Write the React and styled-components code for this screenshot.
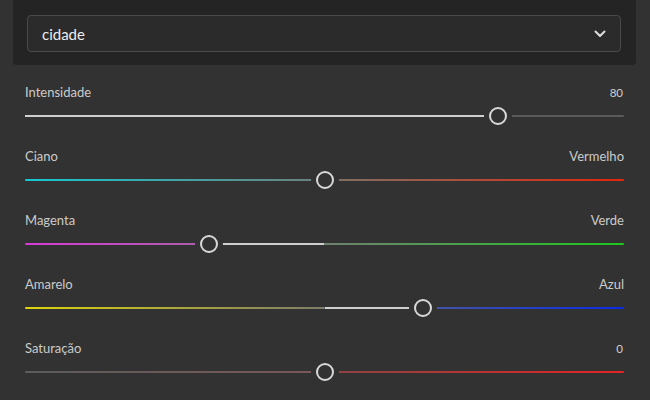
import React from "react";
import styled, { createGlobalStyle } from "styled-components";

const Global = createGlobalStyle`
  html, body { margin: 0; padding: 0; background: #323232; }
  body { font-family: "Lato", "Open Sans", sans-serif; -webkit-font-smoothing: antialiased; }
`;

const Page = styled.div`
  width: 650px;
  height: 400px;
  background: #323232;
  overflow: hidden;
  display: flex;
  flex-direction: column;
`;

const TopPanel = styled.div`
  flex-shrink: 0;
  margin: 0 14px 0 13px;
  height: 65px;
  box-sizing: border-box;
  background: #242424;
  border-radius: 0 0 4px 4px;
  padding: 15px 15px 0 14px;
`;

const Select = styled.div`
  height: 37px;
  box-sizing: border-box;
  border: 1px solid #4a4a4a;
  border-radius: 4px;
  background: #2b2b2b;
  display: flex;
  align-items: center;
  justify-content: space-between;
  padding: 0 14px 0 14px;
  color: #ececec;
  font-size: 15px;
`;

const Chevron = () => (
  <svg width="12" height="8" viewBox="0 0 12 8">
    <path d="M1.5 1.5 L6 6 L10.5 1.5" fill="none" stroke="#dcdcdc" strokeWidth="2" strokeLinecap="round" strokeLinejoin="round" />
  </svg>
);

const Sliders = styled.div`
  flex-shrink: 0;
  padding: 19px 26px 0 25px;
  display: flex;
  flex-direction: column;
`;

const Row = styled.div`
  flex-shrink: 0;
  height: 64px;
  display: flex;
  flex-direction: column;
`;

const LabelRow = styled.div`
  display: flex;
  justify-content: space-between;
  align-items: center;
  height: 16px;
  color: #cbcbcb;
  font-size: 13px;
`;

const Value = styled.span`
  font-size: 11.5px;
  color: #d0d0d0;
  padding-right: 1px;
`;

const TrackArea = styled.div`
  position: relative;
  height: 20px;
  margin-top: 6px;
  display: flex;
  align-items: center;
`;

const Track = styled.div`
  width: 100%;
  height: 2px;
  border-radius: 1px;
  background: ${(p) => p.$bg};
  position: relative;
`;

const Fill = styled.div`
  position: absolute;
  top: 0;
  height: 2px;
  background: #cfcfcf;
`;

const Thumb = styled.div`
  position: absolute;
  top: 1px;
  width: 18px;
  height: 18px;
  box-sizing: border-box;
  border-radius: 50%;
  border: 2px solid #d8d8d8;
  background: #323232;
  box-shadow: 0 0 0 5px #323232;
`;

const sliders = [
  { label: "Intensidade", right: "80", value: 0.79, from: 0, bg: "#5a5a5a" },
  {
    label: "Ciano",
    right: "Vermelho",
    value: 0.5,
    from: 0.5,
    bg: "linear-gradient(to right, #14c8d2 0%, #6d7f7a 50%, #7b7266 50%, #e3260c 100%)",
  },
  {
    label: "Magenta",
    right: "Verde",
    value: 0.307,
    from: 0.5,
    bg: "linear-gradient(to right, #d83ad8 0%, #8a788a 50%, #6f8070 50%, #1ec81e 100%)",
  },
  {
    label: "Amarelo",
    right: "Azul",
    value: 0.664,
    from: 0.5,
    bg: "linear-gradient(to right, #dcd40c 0%, #7c7c6a 50%, #666a80 50%, #0a2ce6 100%)",
  },
  {
    label: "Saturação",
    right: "0",
    value: 0.5,
    from: 0.5,
    bg: "linear-gradient(to right, #5c5c5c 0%, #7a5858 50%, #8a4444 50%, #e42424 100%)",
  },
];

function Slider({ s }) {
  const lo = Math.min(s.from, s.value);
  const hi = Math.max(s.from, s.value);
  const isNum = /^\d+$/.test(s.right);
  return (
    <Row>
      <LabelRow>
        <span>{s.label}</span>
        {isNum ? <Value>{s.right}</Value> : <span>{s.right}</span>}
      </LabelRow>
      <TrackArea>
        <Track $bg={s.bg}>
          {hi > lo && <Fill style={{ left: `${lo * 100}%`, width: `${(hi - lo) * 100}%` }} />}
        </Track>
        <Thumb style={{ left: `calc(${s.value * 100}% - 9px)` }} />
      </TrackArea>
    </Row>
  );
}

export default function App() {
  return (
    <Page>
      <Global />
      <TopPanel>
        <Select>
          <span>cidade</span>
          <Chevron />
        </Select>
      </TopPanel>
      <Sliders>
        {sliders.map((s) => (
          <Slider key={s.label} s={s} />
        ))}
      </Sliders>
    </Page>
  );
}
